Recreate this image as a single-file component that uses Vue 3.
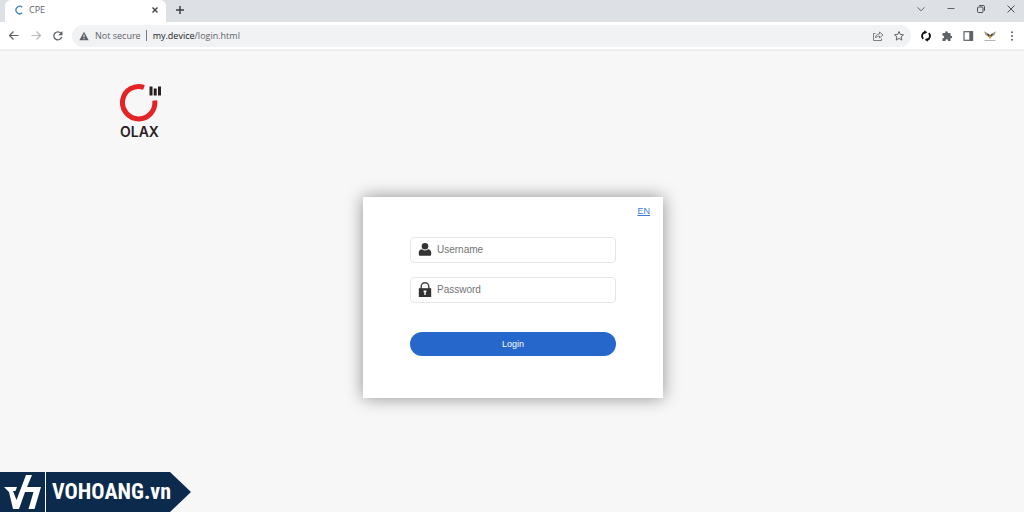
<script setup>
import { ref } from 'vue'

const username = ref('')
const password = ref('')
</script>

<template>
  <div class="browser">
    <header class="tab-strip">
      <div class="tab">
        <svg class="favicon" viewBox="0 0 10 10" aria-hidden="true"><path d="M8.2 2.300A3.700 3.700 0 1 0 8.200 7.800" fill="none" stroke="#3b7fc4" stroke-width="1.300" /></svg>
        <span class="tab-title">CPE</span>
        <button class="icon-button" aria-label="Close tab">
          <svg width="8" height="8" viewBox="0 0 8 8"><path d="M1.500 1.500l5 5M6.500 1.500l-5 5" stroke="#3c4043" stroke-width="1.400" /></svg>
        </button>
      </div>
      <button class="icon-button new-tab" aria-label="New tab">
        <svg width="10" height="10" viewBox="0 0 10 10"><path d="M5 1v8M1 5h8" stroke="#3c4043" stroke-width="1.500" /></svg>
      </button>
      <div class="window-controls">
        <button class="icon-button" aria-label="Search tabs">
          <svg width="10" height="10" viewBox="0 0 10 10"><path d="M1.500 3.300L5 6.800l3.500-3.500" fill="none" stroke="#5f6368" /></svg>
        </button>
        <button class="icon-button" aria-label="Minimize">
          <svg width="10" height="10" viewBox="0 0 10 10"><path d="M1.500 4.500h7" stroke="#5f6368" /></svg>
        </button>
        <button class="icon-button" aria-label="Restore">
          <svg width="10" height="10" viewBox="0 0 10 10"><rect x="1.500" y="3" width="5.500" height="5.500" rx="1" fill="none" stroke="#4b4f54" /><path d="M3.200 1.500h4.100a1.200 1.200 0 0 1 1.200 1.200v4.100" fill="none" stroke="#4b4f54" /></svg>
        </button>
        <button class="icon-button" aria-label="Close window">
          <svg width="10" height="10" viewBox="0 0 10 10"><path d="M1.500 1.500l7 7M8.500 1.500l-7 7" stroke="#4b4f54" /></svg>
        </button>
      </div>
    </header>

    <nav class="toolbar" aria-label="Browser toolbar">
      <div class="navigation">
        <button class="icon-button" aria-label="Back">
          <svg width="12" height="12" viewBox="0 0 12 12"><path d="M10.500 5.500h-9M5.500 1.500l-4 4 4 4" fill="none" stroke="#5f6368" stroke-width="1.200" /></svg>
        </button>
        <button class="icon-button" aria-label="Forward">
          <svg width="12" height="12" viewBox="0 0 12 12"><path d="M1.500 5.500h9M6.500 1.500l4 4-4 4" fill="none" stroke="#b4b7ba" stroke-width="1.200" /></svg>
        </button>
        <button class="icon-button" aria-label="Reload">
          <svg width="12" height="12" viewBox="0 0 12 12"><path d="M9 3.300A4 4 0 1 0 9.700 7" fill="none" stroke="#5f6368" stroke-width="1.300" /><path d="M10.500 1v4.200H6.300z" fill="#5f6368" /></svg>
        </button>
      </div>
      <div class="omnibox">
        <svg width="10" height="10" viewBox="0 0 10 10" aria-hidden="true"><path d="M5 .8L9.700 9.200H.3z" fill="#5f6368" /><path d="M5 3.600v2.700M5 7.200v1" stroke="#f1f3f4" /></svg>
        <span class="security">Not secure</span>
        <span class="divider"></span>
        <a class="address" href="#">my.device<span>/login.html</span></a>
        <button class="icon-button" aria-label="Share">
          <svg width="12" height="12" viewBox="0 0 12 12"><path d="M3.500 3.500H1.500v7h8V8.500" fill="none" stroke="#7b8085" /><path d="M3.500 8c.2-2.700 1.500-4 4-4.100V2L11 5 7.500 8V6.100C5.800 6.100 4.500 6.600 3.500 8z" fill="none" stroke="#6b7075" stroke-width=".9" /></svg>
        </button>
        <button class="icon-button" aria-label="Bookmark">
          <svg width="12" height="12" viewBox="0 0 12 12"><path d="M6 1.500l1.300 3 3.200.3-2.400 2.100.7 3.200L6 8.400l-2.800 1.700.7-3.200-2.400-2.100 3.200-.3z" fill="none" stroke="#5f6368" /></svg>
        </button>
      </div>
      <div class="extensions">
        <button class="icon-button" aria-label="Sync extension">
          <svg width="12" height="12" viewBox="0 0 12 12"><path d="M5 2.100A4 4 0 0 0 3.200 8.800M7 9.900A4 4 0 0 0 8.800 3.200" fill="none" stroke="#111" stroke-width="1.900" /><path d="M4.300.3l3 1.900-3 2zM7.700 7.800v4l-3-2z" fill="#111" /></svg>
        </button>
        <button class="icon-button" aria-label="Extensions">
          <svg width="12" height="12" viewBox="0 0 12 12"><path d="M1.500 3h2.700V2.500a1.300 1.300 0 0 1 2.600 0V3h2.700v2.700h.4a1.300 1.300 0 0 1 0 2.600h-.4V11H7v-.5a1.200 1.200 0 0 0-2.400 0v.5H1.500V8.200H2a1.200 1.200 0 0 0 0-2.400h-.5z" fill="#5f6368" /></svg>
        </button>
        <button class="icon-button" aria-label="Side panel">
          <svg width="12" height="12" viewBox="0 0 12 12"><rect x="2" y="1.700" width="8.600" height="8.600" fill="none" stroke="#5f6368" stroke-width="1.200" /><path d="M7.300 1.500h3.500v9H7.300z" fill="#5f6368" /></svg>
        </button>
        <button class="icon-button" aria-label="Profile">
          <svg width="14" height="12" viewBox="0 0 14 12"><path d="M1 1.300l3.800 1.900L6 4.500h2l1.200-1.300L13 1.300 11.500 5 9 6.500 7 9 5 6.500 2.500 5z" fill="#a3988d" /><path d="M5.500 4.500L7 5.500l1.500-1L8.300 7 7 8.800 5.700 7z" fill="#d3a23c" /><path d="M4.500 4l1.900 2.200M9.500 4L7.600 6.200" stroke="#433a33" stroke-width="1.200" /><path d="M1.500 10.500h11" stroke="#b5b5b5" /></svg>
        </button>
        <button class="icon-button" aria-label="Browser menu">
          <svg width="12" height="12" viewBox="0 0 12 12" fill="#5f6368"><circle cx="6" cy="2.300" r="1" /><circle cx="6" cy="6" r="1" /><circle cx="6" cy="9.700" r="1" /></svg>
        </button>
      </div>
    </nav>

    <main class="page">
      <div class="brand">
        <svg width="42" height="40" viewBox="0 0 42 40" aria-hidden="true"><path d="M24 4.400A16.200 16.200 0 1 0 34.700 17.500" fill="none" stroke="#e32326" stroke-width="5" /><path d="M29.500 3.500h3v9h-3zM33.700 5.500h3v7h-3zM38 3.500h3v9h-3z" fill="#28201f" /></svg>
        <span class="brand-name">OLAX</span>
      </div>

      <form class="login-card" @submit.prevent>
        <a class="language" href="#">EN</a>
        <label class="field">
          <svg width="14" height="16" viewBox="0 0 14 16" aria-hidden="true"><ellipse cx="7" cy="4.300" rx="3.300" ry="3.300" fill="#333" /><path d="M.8 12.200V10.500c0-2 1.400-3 3.200-3.300Q7 9.800 10 7.200c1.800.3 3.200 1.300 3.200 3.300v1.700q0 1.500-1 1.500H1.800q-1 0-1-1.500z" fill="#333" /></svg>
          <input v-model="username" type="text" aria-label="Username" placeholder="Username" />
        </label>
        <label class="field">
          <svg width="14" height="16" viewBox="0 0 14 16" aria-hidden="true"><path d="M3.200 7V4.500a3.800 3.800 0 0 1 7.600 0V7" fill="none" stroke="#444" stroke-width="1.400" /><path d="M.8 6.200h12.400v8.800H.8z" fill="#333" /><path d="M5.600 8.500h2.800v1.700h-.7V13H6.300v-2.800h-.7z" fill="#fff" /></svg>
          <input v-model="password" type="password" aria-label="Password" placeholder="Password" />
        </label>
        <button class="login-button" type="submit">Login</button>
      </form>
    </main>

    <aside class="watermark">
      <svg class="watermark-mark" width="45" height="40" viewBox="0 0 45 40" aria-hidden="true"><path d="M4 15h13l-1.500 4H13l3.500 9L26 3h6l-5 12h14l-6.500 22h-6l5-17H25l-6 17h-6L9 20z" fill="#fff" /></svg>
      <span class="watermark-name">VOHOANG.vn</span>
    </aside>
  </div>
</template>

<style>
body {
  margin: 0;
}
</style>

<style scoped>
.browser {
  display: flex;
  flex-direction: column;
  min-height: 100vh;
  background: #f7f7f7;
  font-family: "Liberation Sans", Arial, sans-serif;
}

.icon-button {
  display: flex;
  align-items: center;
  justify-content: center;
  padding: 0;
  border: 0;
  background: none;
}

.tab-strip {
  display: flex;
  align-items: stretch;
  height: 22px;
  padding-left: 5px;
  background: #dde1e6;
}

.tab {
  display: flex;
  align-items: center;
  box-sizing: border-box;
  width: 161px;
  padding: 0 7px 2px 9px;
  border-radius: 6px 6px 0 0;
  background: #fff;
  color: #5f6368;
  font: 9px/16px "Open Sans", sans-serif;
}

.favicon {
  width: 10px;
  height: 10px;
}

.tab-title {
  flex: 1;
  margin-left: 5px;
}

.new-tab {
  margin-left: 9px;
  padding-bottom: 2px;
}

.window-controls {
  display: flex;
  gap: 20px;
  margin-left: auto;
  padding: 0 8px 4px 0;
}

.toolbar {
  display: flex;
  align-items: center;
  height: 27px;
  padding: 0 6px 0 8px;
  border-bottom: 2px solid #ededed;
  background: #fff;
}

.navigation {
  display: flex;
  gap: 10px;
}

.omnibox {
  display: flex;
  flex: 1;
  align-items: center;
  height: 22px;
  margin-left: 8px;
  padding: 0 6px 0 7px;
  border-radius: 11px;
  background: #f0f2f4;
  color: #5f6368;
  font: 9px/16px "Open Sans", sans-serif;
  gap: 9px;
}

.security {
  margin-left: -3px;
}

.divider {
  width: 1px;
  height: 11px;
  margin-left: -4px;
  background: #777;
}

.address {
  flex: 1;
  margin-left: -3px;
  color: #202124;
  text-decoration: none;
}

.address span {
  color: #5f6368;
}

.extensions {
  display: flex;
  gap: 9px;
  margin-left: 9px;
}

.page {
  display: flex;
  flex: 1;
  flex-direction: column;
  padding: 32px 0 64px 2px;
}

.brand {
  display: flex;
  flex-direction: column;
  width: 42px;
  margin-left: 118px;
}

.brand-name {
  color: #28201f;
  font: 600 14px/18px Inter, sans-serif;
}

.login-card {
  display: flex;
  flex-direction: column;
  box-sizing: border-box;
  width: 300px;
  margin: 56px auto 0;
  padding: 8px 47px 42px;
  background: #fff;
  box-shadow: 0 0 16px rgba(0, 0, 0, 0.42);
}

.language {
  align-self: flex-end;
  margin: 0 -34px 20px 0;
  color: #397bdc;
  font-size: 9px;
  line-height: 12px;
}

.field {
  display: flex;
  align-items: center;
  box-sizing: border-box;
  height: 26px;
  margin-bottom: 14px;
  padding: 0 7px;
  border: 1px solid #e5e5e5;
  border-radius: 4px;
}

.field input {
  flex: 1;
  min-width: 0;
  margin-left: 5px;
  padding: 0;
  border: 0;
  outline: 0;
  background: none;
  color: #333;
  font: 10px/16px "Liberation Sans", Arial, sans-serif;
}

.field input::placeholder {
  color: #737373;
}

.login-button {
  height: 24px;
  margin-top: 15px;
  padding: 0;
  border: 0;
  border-radius: 12px;
  background: #2567cb;
  color: #fff;
  font: 9px/16px "Liberation Sans", Arial, sans-serif;
}

.watermark {
  position: fixed;
  bottom: 0;
  left: 0;
  display: flex;
  align-items: center;
  height: 40px;
  padding-right: 20px;
  background: #0c2b4c;
  clip-path: polygon(0 0, calc(100% - 21px) 0, 100% 50%, calc(100% - 21px) 100%, 0 100%);
}

.watermark-mark {
  border-right: 1px solid #fff;
}

.watermark-name {
  margin-left: 6px;
  color: #fff;
  font: 700 22px/40px "Roboto Condensed", Roboto, sans-serif;
}
</style>
